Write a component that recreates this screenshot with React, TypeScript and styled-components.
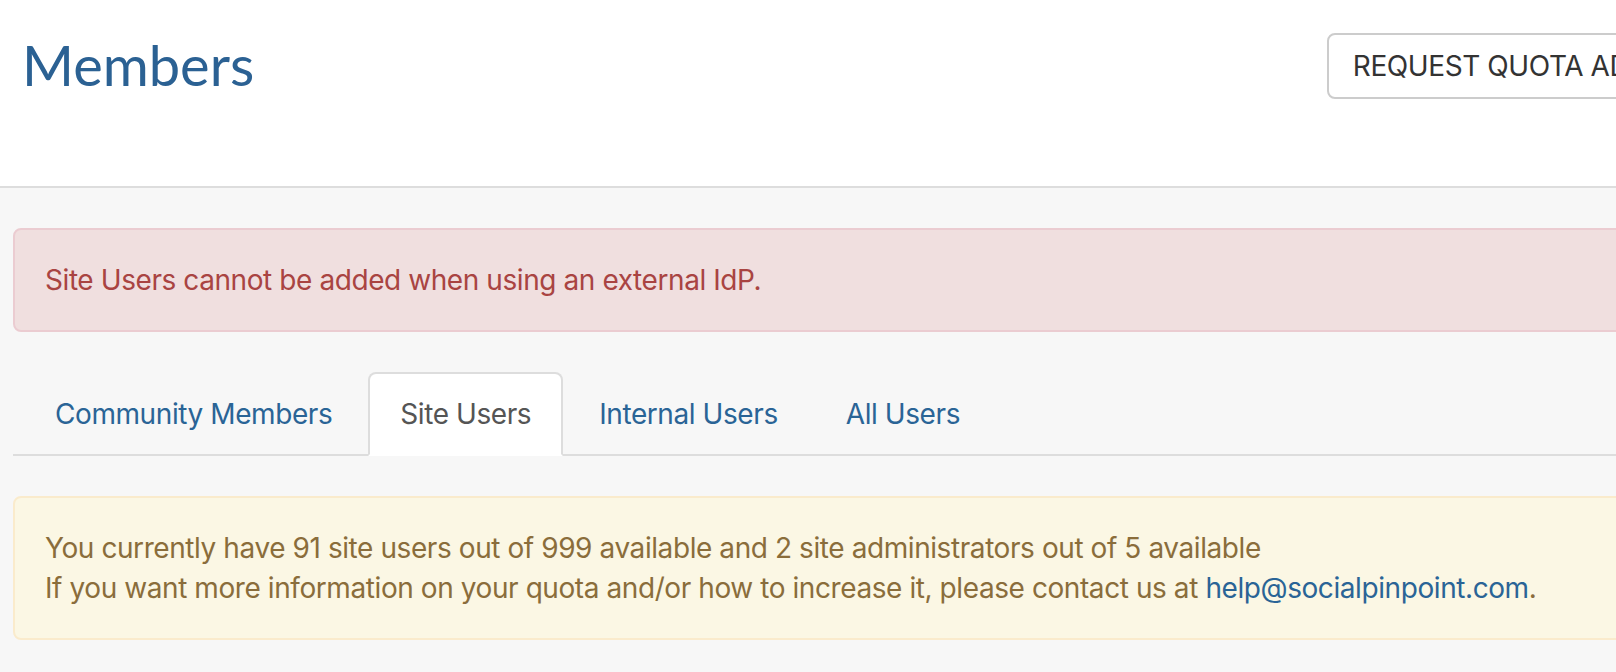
import React from "react";
import styled, { createGlobalStyle } from "styled-components";

const GlobalStyle = createGlobalStyle`
  html, body {
    margin: 0;
    padding: 0;
    overflow: hidden;
    background: #f7f7f7;
  }
  body {
    font-family: Inter, "Liberation Sans", sans-serif;
    font-size: 28px;
    line-height: 40px;
    letter-spacing: -0.42px;
    color: #333;
  }
  * { box-sizing: border-box; }
`;

const Page = styled.div`
  width: 1862px;
  min-height: 672px;
  background: #f7f7f7;
`;

const Header = styled.header`
  display: flex;
  justify-content: space-between;
  align-items: flex-start;
  height: 188px;
  padding: 33px 56px 0 22px;
  background: #ffffff;
  border-bottom: 2px solid #dddddd;
`;

const Title = styled.h1`
  margin: 5px 0 0;
  font-family: Lato, "Noto Sans", sans-serif;
  font-weight: 400;
  font-size: 56px;
  line-height: 54px;
  letter-spacing: 0;
  color: #2b6193;
`;

const Button = styled.button`
  font-family: Inter, "Liberation Sans", sans-serif;
  font-size: 28px;
  line-height: 40px;
  letter-spacing: -0.42px;
  padding: 11px 24px;
  color: #333333;
  background: #ffffff;
  border: 2px solid #cccccc;
  border-radius: 8px;
  white-space: nowrap;
`;

const Main = styled.main`
  padding: 40px 13px 0;
`;

const Alert = styled.div<{ $tone: "danger" | "warning" }>`
  padding: 30px;
  margin-bottom: 40px;
  border: 2px solid ${(p) => (p.$tone === "danger" ? "#ebccd1" : "#faebcc")};
  border-radius: 8px;
  background: ${(p) => (p.$tone === "danger" ? "#f0dfdf" : "#fbf7e4")};
  color: ${(p) => (p.$tone === "danger" ? "#a94442" : "#8a6d3b")};
`;

const Tabs = styled.ul`
  display: flex;
  gap: 4px;
  list-style: none;
  margin: 0 0 40px;
  padding: 0 0 0 10px;
  border-bottom: 2px solid #dddddd;
`;

const Tab = styled.li<{ $active?: boolean }>`
  margin-bottom: -2px;
  padding: 20px 30px;
  border: 2px solid ${(p) => (p.$active ? "#dddddd" : "transparent")};
  border-bottom-color: transparent;
  border-radius: 8px 8px 0 0;
  background: ${(p) => (p.$active ? "#ffffff" : "transparent")};
  color: ${(p) => (p.$active ? "#555555" : "#2a6496")};
  cursor: pointer;
`;

const Link = styled.a`
  color: #2a6496;
  text-decoration: none;
`;

export default function App() {
  return (
    <>
      <GlobalStyle />
      <Page>
        <Header>
          <Title>Members</Title>
          <Button>REQUEST QUOTA ADJUSTMENT</Button>
        </Header>
        <Main>
          <Alert $tone="danger">Site Users cannot be added when using an external IdP.</Alert>
          <Tabs>
            <Tab>Community Members</Tab>
            <Tab $active>Site Users</Tab>
            <Tab>Internal Users</Tab>
            <Tab>All Users</Tab>
          </Tabs>
          <Alert $tone="warning">
            You currently have 91 site users out of 999 available and 2 site administrators out of 5 available
            <br />
            If you want more information on your quota and/or how to increase it, please contact us at{" "}
            <Link href="#">help@socialpinpoint.com</Link>.
          </Alert>
        </Main>
      </Page>
    </>
  );
}
